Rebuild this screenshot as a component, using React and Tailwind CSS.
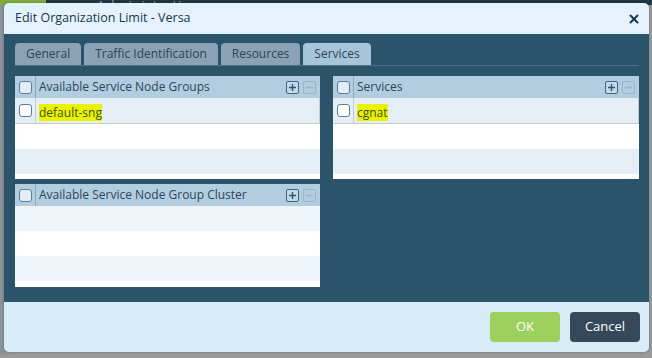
import { X } from 'lucide-react';

const font = { fontFamily: '"Open Sans", "Liberation Sans", sans-serif' };

function Checkbox({ light }) {
  return (
    <span
      className={`block w-[13px] h-[13px] rounded-[3px] border-[1.5px] border-[#5d7e98] ${
        light ? 'bg-white' : 'bg-[#e3edf5]'
      }`}
    ></span>
  );
}

function PlusMinus() {
  return (
    <div className="flex items-center gap-[4px] pr-[4px]">
      <span className="w-[13px] h-[13px] rounded-[2px] border border-[#3d6580] flex items-center justify-center bg-[#c4d9e8]">
        <svg width="9" height="9" viewBox="0 0 9 9">
          <path d="M4.5 1v7M1 4.5h7" stroke="#2f566f" strokeWidth="1.4" />
        </svg>
      </span>
      <span className="w-[13px] h-[13px] rounded-[2px] border border-[#9db5c7] flex items-center justify-center">
        <svg width="9" height="9" viewBox="0 0 9 9">
          <path d="M1 4.5h7" stroke="#9db5c7" strokeWidth="1.4" />
        </svg>
      </span>
    </div>
  );
}

function Panel({ title, item, rows }) {
  return (
    <div className="h-[103px] bg-white overflow-hidden flex flex-col">
      <div className="h-[22px] bg-[#b3cde0] flex items-center shrink-0">
        <div className="w-[21px] h-full border-r border-[#8daac0] flex items-center justify-center">
          <Checkbox />
        </div>
        <div className="flex-1 pl-[3px] text-[12px] text-[#2c465a] leading-none">{title}</div>
        <PlusMinus />
      </div>
      {item ? (
        <div className="h-[26px] bg-[#e6eef5] border-b border-r border-[#c3cbd3] flex items-center shrink-0">
          <div className="w-[21px] h-full border-r border-[#c3cbd3] flex items-center justify-center">
            <Checkbox light />
          </div>
          <div className="pl-[3px]">
            <span className="bg-[#e9f200] text-[#3f5320] text-[12px] leading-[17px] inline-block">{item}</span>
          </div>
        </div>
      ) : (
        <div className="h-[25px] bg-[#eff5f8] shrink-0"></div>
      )}
      {rows.map((c, i) => (
        <div key={i} className={`h-[25px] shrink-0 ${c}`}></div>
      ))}
    </div>
  );
}

export default function App() {
  const tabs = ['General', 'Traffic Identification', 'Resources', 'Services'];
  return (
    <div className="relative w-[652px] h-[358px] bg-[#9a9a9a] overflow-hidden" style={font}>
      {/* page behind the modal */}
      <div className="h-[5px] bg-[#1f3846] flex items-end overflow-hidden">
        <div className="w-[46px] h-full bg-[#7fae3c]"></div>
        <div className="ml-[50px] text-[15px] leading-[10px] h-[5px] text-[#8a98a3] whitespace-nowrap overflow-hidden">Administration</div>
      </div>
      <div className="absolute left-0 top-[5px] w-[6px] h-[350px] bg-[#8b9398]"></div>

      {/* modal */}
      <div className="absolute left-[4px] top-[3px] w-[645px] h-[349px] rounded-[5px] overflow-hidden flex flex-col shadow-[0_0_3px_rgba(0,0,0,0.3)]">
        <div className="h-[31px] bg-[#e4f3fb] flex items-center justify-between pl-[11px] pr-[8px] shrink-0">
          <span className="text-[12.5px] text-[#1c3548]">Edit Organization Limit - Versa</span>
          <X size={14} strokeWidth={3.5} color="#1d3a52" />
        </div>

        <div className="flex-1 bg-[#2b536a] pt-[10px] pl-[11px] pr-[10px]">
          <div className="flex items-end gap-[3px] h-[22px] border-b border-[#4a7289]">
            {tabs.map((t) => (
              <div
                key={t}
                className={`h-[22px] px-[11px] rounded-t-[4px] flex items-center text-[12px] text-[#2f4354] ${
                  t === 'Services' ? 'bg-[#a7c5d8]' : 'bg-[#8aa2b6]'
                }`}
              >
                {t}
              </div>
            ))}
          </div>

          <div className="grid grid-cols-[305px_306px] gap-x-[13px] mt-[10px]">
            <div className="flex flex-col gap-[5px]">
              <Panel
                title="Available Service Node Groups"
                item="default-sng"
                rows={['bg-white', 'bg-[#e6eef5]']}
              />
              <Panel
                title="Available Service Node Group Cluster"
                rows={['bg-white', 'bg-[#eff5f8]']}
              />
            </div>
            <div>
              <Panel title="Services" item="cgnat" rows={['bg-white', 'bg-[#e6eef5]']} />
            </div>
          </div>
        </div>

        <div className="h-[50px] bg-[#d7ecf7] flex items-start justify-end gap-[10px] pt-[10px] pr-[9px] shrink-0">
          <button className="w-[70px] h-[30px] rounded-[4px] bg-[#9dd05c] text-white text-[13px]">OK</button>
          <button className="w-[70px] h-[30px] rounded-[4px] bg-[#36495b] text-white text-[13px]">Cancel</button>
        </div>
      </div>
    </div>
  );
}
